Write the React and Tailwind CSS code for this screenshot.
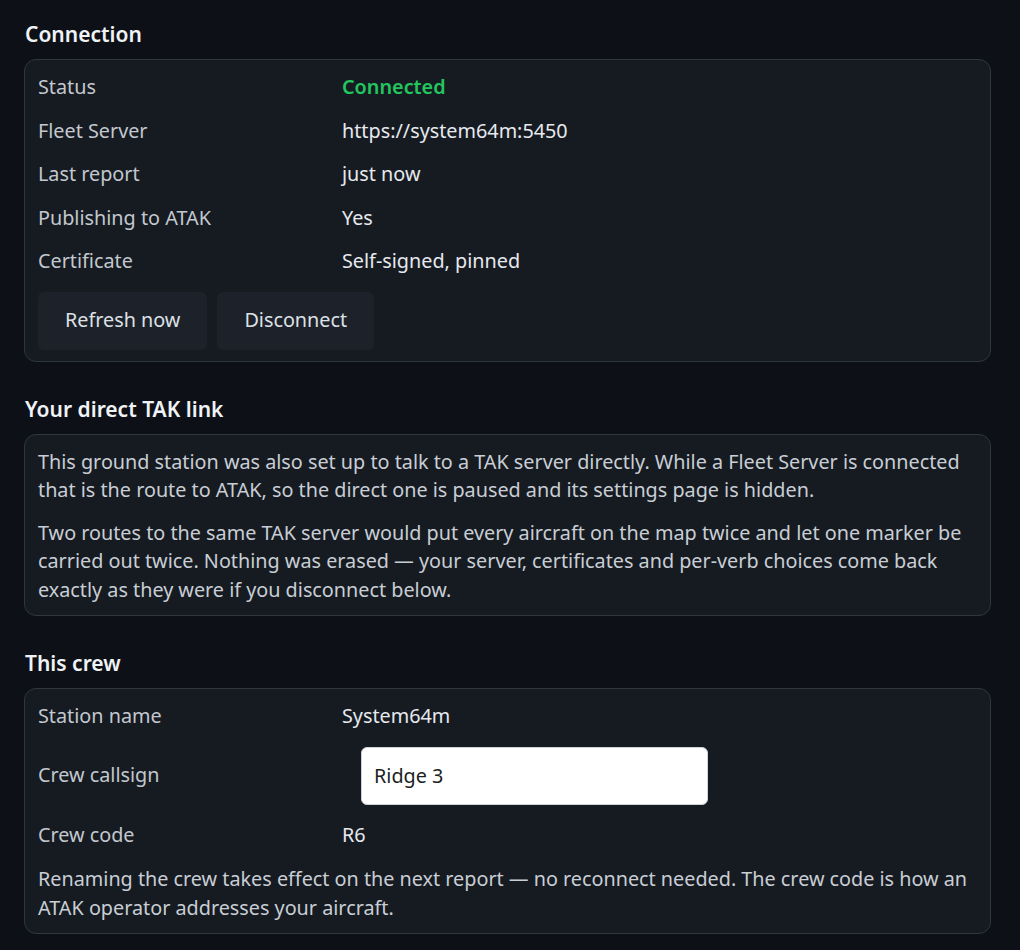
import { useState } from 'react';

const font = { fontFamily: '"Noto Sans", "Open Sans", sans-serif' };

function Section({ title, children }) {
  return (
    <section>
      <h2 className="pl-px text-[21px] font-semibold leading-[28px] text-[#f0f3f6]">{title}</h2>
      <div className="mt-[11px] rounded-[12px] border border-[#30363d] bg-[#161b22] px-[13px] pt-[13px] pb-[11px]">
        {children}
      </div>
    </section>
  );
}

function Row({ label, children, valueClass = 'text-[#e6e9ee]' }) {
  return (
    <div className="flex items-center">
      <div className="w-[304px] shrink-0 text-[#c3c8cf]">{label}</div>
      <div className={valueClass}>{children}</div>
    </div>
  );
}

export default function App() {
  const [callsign, setCallsign] = useState('Ridge 3');

  return (
    <div
      className="min-h-[950px] bg-[#0d1017] pt-[20px] pr-[29px] pl-[24px] text-[19.8px] leading-[28.5px]"
      style={font}
    >
      <Section title="Connection">
        <div className="flex flex-col gap-[15px]">
          <Row label="Status" valueClass="font-semibold text-[#22c55e]">Connected</Row>
          <Row label="Fleet Server">https://system64m:5450</Row>
          <Row label="Last report">just now</Row>
          <Row label="Publishing to ATAK">Yes</Row>
          <Row label="Certificate">Self-signed, pinned</Row>
        </div>
        <div className="mt-[16px] flex gap-[10px]">
          <button className="h-[58px] rounded-[6px] bg-[#1d222a] px-[27px] text-[#dde1e6]">Refresh now</button>
          <button className="h-[58px] rounded-[6px] bg-[#1d222a] px-[27px] text-[#dde1e6]">Disconnect</button>
        </div>
      </Section>

      <div className="mt-[33px]">
        <Section title="Your direct TAK link">
          <div className="text-[#c9ced5]">
            <p>
              This ground station was also set up to talk to a TAK server directly. While a Fleet Server is connected
              that is the route to ATAK, so the direct one is paused and its settings page is hidden.
            </p>
            <p className="mt-[14px]">
              Two routes to the same TAK server would put every aircraft on the map twice and let one marker be
              carried out twice. Nothing was erased — your server, certificates and per-verb choices come back
              exactly as they were if you disconnect below.
            </p>
          </div>
        </Section>
      </div>

      <div className="mt-[33px]">
        <Section title="This crew">
          <div className="flex flex-col gap-[16px]">
            <Row label="Station name">System64m</Row>
            <Row label="Crew callsign">
              <input
                value={callsign}
                onChange={(e) => setCallsign(e.target.value)}
                className="ml-[19px] h-[58px] w-[347px] rounded-[6px] border border-[#d0d4da] bg-white px-[12px] text-[#1b1f24] outline-none"
                style={font}
              />
            </Row>
            <Row label="Crew code">R6</Row>
            <p className="text-[#c9ced5]">
              Renaming the crew takes effect on the next report — no reconnect needed. The crew code is how an
              ATAK operator addresses your aircraft.
            </p>
          </div>
        </Section>
      </div>
    </div>
  );
}
